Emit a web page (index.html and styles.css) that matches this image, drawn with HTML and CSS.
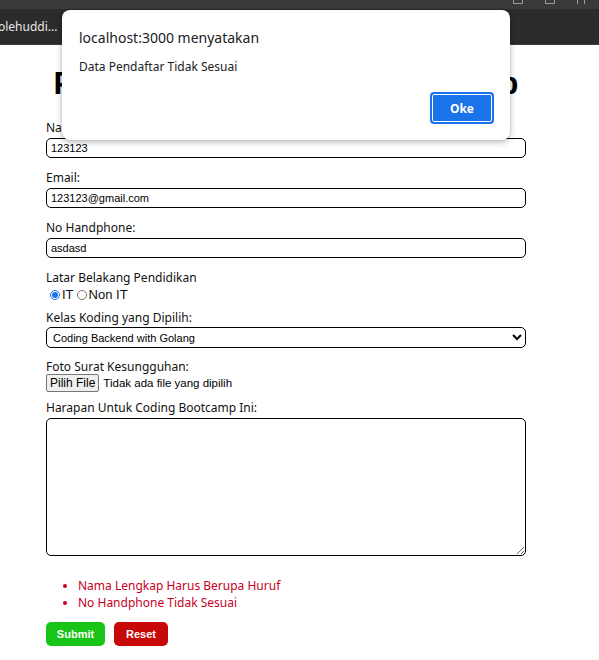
FILE: index.html
```html
<!DOCTYPE html>
<html>
<head>
<meta charset="utf-8">
<link rel="stylesheet" href="styles.css">
</head>
<body>
<div class="chrome">
  <div class="titlebar">
    <div class="winctl"><span class="wc-min"></span><span class="wc-max"></span><span class="wc-x"></span></div>
  </div>
  <div class="bookmarks"><span class="bm">olehuddi...</span></div>
</div>
<main class="page">
  <h1 class="title">Pendaftaran Coding Bootcamp</h1>
  <form class="form">
    <div class="field">
      <label class="lbl">Nama Lengkap:</label>
      <input class="inp" type="text" value="123123">
    </div>
    <div class="field">
      <label class="lbl">Email:</label>
      <input class="inp" type="text" value="123123@gmail.com">
    </div>
    <div class="field">
      <label class="lbl">No Handphone:</label>
      <input class="inp" type="text" value="asdasd">
    </div>
    <div class="field field-radio">
      <label class="lbl">Latar Belakang Pendidikan</label>
      <div class="radios">
        <input type="radio" name="bg" checked class="rad"><span class="rtxt">IT</span>
        <input type="radio" name="bg" class="rad"><span class="rtxt">Non IT</span>
      </div>
    </div>
    <div class="field field-sel">
      <label class="lbl">Kelas Koding yang Dipilih:</label>
      <select class="sel"><option>Coding Backend with Golang</option></select>
    </div>
    <div class="field field-file">
      <label class="lbl">Foto Surat Kesungguhan:</label>
      <div class="file"><span class="filebtn">Pilih File</span><span class="filetxt">Tidak ada file yang dipilih</span></div>
    </div>
    <div class="field">
      <label class="lbl">Harapan Untuk Coding Bootcamp Ini:</label>
      <textarea class="ta"></textarea>
    </div>
    <ul class="errors">
      <li>Nama Lengkap Harus Berupa Huruf</li>
      <li>No Handphone Tidak Sesuai</li>
    </ul>
    <div class="actions">
      <button type="button" class="btn btn-submit">Submit</button>
      <button type="button" class="btn btn-reset">Reset</button>
    </div>
  </form>
</main>
<div class="dialog">
  <div class="dlg-title">localhost:3000 menyatakan</div>
  <div class="dlg-msg">Data Pendaftar Tidak Sesuai</div>
  <div class="dlg-actions"><button type="button" class="dlg-ok">Oke</button></div>
</div>
</body>
</html>
```
FILE: styles.css
```css
* { box-sizing: border-box; }
html, body { margin: 0; padding: 0; background: #fff; }
body { font-family: "Liberation Sans", Arial, sans-serif; width: 599px; height: 660px; overflow: hidden; position: relative; }

.chrome { height: 45px; display: flex; flex-direction: column; }
.titlebar { height: 9px; background: #3a3a3a; display: flex; justify-content: flex-end; }
.winctl { display: flex; gap: 22px; padding-right: 14px; align-items: flex-end; height: 4px; overflow: hidden; }
.wc-min, .wc-max { width: 10px; height: 4px; border: 1px solid #9a9a9a; border-top: none; }
.wc-x { width: 8px; height: 4px; border-left: 1px solid #9a9a9a; border-right: 1px solid #9a9a9a; }
.bookmarks { flex: 1; background: #2b2b2b; display: flex; align-items: center; border-bottom: 1px solid #3d3d3d; }
.bm { color: #e8e8e8; font-family: "Noto Sans", sans-serif; font-size: 12px; margin-left: -2px; }

.page { padding-left: 46px; width: 526px; }
.title { margin: 0; height: 74px; padding-top: 2px; display: flex; align-items: center; justify-content: center; font-size: 31.7px; font-weight: bold; color: #000; }

.form { display: flex; flex-direction: column; width: 480px; }
.field { display: flex; flex-direction: column; margin-bottom: 11px; }
.lbl { font-family: "Noto Sans", sans-serif; font-size: 12px; line-height: 18px; height: 18px; color: #111; margin-bottom: 1px; }
.inp { height: 20px; width: 480px; border: 1.5px solid #000; border-radius: 5px; padding: 0 4px; font-family: "Liberation Sans", Arial, sans-serif; font-size: 11px; color: #000; background: #fff; outline: none; }

.field-radio { margin-bottom: 6px; }
.radios { display: flex; align-items: center; height: 17px; margin-top: -2px; padding-left: 3px; }
.rad { margin: 0 2px 0 1px; width: 10px; height: 10px; accent-color: #1a73e8; }
.rtxt { font-family: "Liberation Sans", Arial, sans-serif; font-size: 13px; color: #111; margin-right: 2px; }

.field-sel { margin-bottom: 10px; }
.sel { height: 21px; width: 480px; margin-top: -1px; border: 1.5px solid #000; border-radius: 5px; padding: 0 2px; font-family: "Liberation Sans", Arial, sans-serif; font-size: 11px; color: #000; background: #fff; }

.field-file { margin-bottom: 7px; }
.file { display: flex; align-items: center; height: 18px; margin-top: -3px; }
.filebtn { height: 18px; padding: 0 3px; display: flex; align-items: center; background: #efefef; border: 1px solid #767676; border-radius: 2px; font-family: "Liberation Sans", Arial, sans-serif; font-size: 12px; color: #000; }
.filetxt { font-family: "Liberation Sans", Arial, sans-serif; font-size: 11.5px; color: #000; margin-left: 4px; }

.ta { width: 480px; height: 138px; margin-top: 0; border: 1.5px solid #000; border-radius: 5px; resize: vertical; background: #fff; }

.errors { margin: 10px 0 0 0; padding-left: 32px; color: #c8001e; font-family: "Noto Sans", sans-serif; font-size: 12px; line-height: 17px; }
.errors li { padding-left: 0; }

.actions { display: flex; gap: 9px; margin-top: 11px; }
.btn { height: 24px; border: none; border-radius: 5px; color: #fff; font-family: "Liberation Sans", Arial, sans-serif; font-weight: bold; font-size: 11px; padding: 0; }
.btn-submit { width: 59px; background: #19c419; }
.btn-reset { width: 54px; background: #c60808; }

.dialog { position: absolute; left: 62px; top: 10px; width: 448px; height: 130px; background: #fff; border-radius: 8px; box-shadow: 0 2px 6px rgba(0,0,0,0.28), 0 0 2px rgba(0,0,0,0.15); padding: 19px 16px 0 17px; display: flex; flex-direction: column; }
.dlg-title { font-family: "Noto Sans", sans-serif; font-size: 14px; line-height: 18px; color: #202124; }
.dlg-msg { font-family: "Noto Sans", sans-serif; font-size: 12px; line-height: 16px; color: #202124; margin-top: 12px; }
.dlg-actions { display: flex; justify-content: flex-end; margin-top: 17px; }
.dlg-ok { width: 64px; height: 32px; border-radius: 4px; background: #1a73e8; color: #fff; border: 2px solid #1a73e8; box-shadow: inset 0 0 0 1px #fff; font-family: "Noto Sans", sans-serif; font-weight: bold; font-size: 12px; padding: 0; }
```
